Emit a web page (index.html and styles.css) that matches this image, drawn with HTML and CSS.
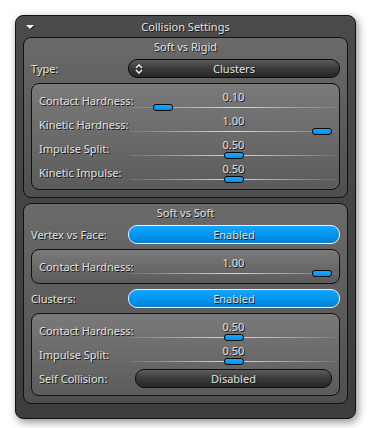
FILE: index.html
```html
<!DOCTYPE html>
<html lang="en">
<head>
  <meta charset="UTF-8" />
  <title>Collision Settings</title>
  <link rel="stylesheet" href="styles.css">
</head>
<body>
  <div class="window">
    <div class="header">
      <span class="arrow"></span>
      <span class="title">Collision Settings</span>
    </div>

    <!-- Soft vs Rigid -->
    <div class="group">
      <div class="group-title">Soft vs Rigid</div>
      <div class="row">
        <span class="label">Type:</span>
        <div class="dropdown">
          <svg class="updown" width="8" height="10" viewBox="0 0 8 10">
            <path d="M1 4 L4 1 L7 4 M1 6 L4 9 L7 6" fill="none" stroke="#e8e8e8" stroke-width="1.6"/>
          </svg>
          <span>Clusters</span>
        </div>
      </div>
      <div class="subpanel">
        <div class="prow">
          <span class="label">Contact Hardness:</span>
          <div class="slider"><span class="value">0.10</span><span class="track"></span><span class="thumb" style="--v:0.10"></span></div>
        </div>
        <div class="prow">
          <span class="label">Kinetic Hardness:</span>
          <div class="slider"><span class="value">1.00</span><span class="track"></span><span class="thumb" style="--v:1"></span></div>
        </div>
        <div class="prow">
          <span class="label">Impulse Split:</span>
          <div class="slider"><span class="value">0.50</span><span class="track"></span><span class="thumb" style="--v:0.5"></span></div>
        </div>
        <div class="prow">
          <span class="label">Kinetic Impulse:</span>
          <div class="slider"><span class="value">0.50</span><span class="track"></span><span class="thumb" style="--v:0.5"></span></div>
        </div>
      </div>
    </div>

    <!-- Soft vs Soft -->
    <div class="group">
      <div class="group-title">Soft vs Soft</div>
      <div class="row">
        <span class="label">Vertex vs Face:</span>
        <div class="toggle on">Enabled</div>
      </div>
      <div class="subpanel">
        <div class="prow">
          <span class="label">Contact Hardness:</span>
          <div class="slider"><span class="value">1.00</span><span class="track"></span><span class="thumb" style="--v:1"></span></div>
        </div>
      </div>
      <div class="row">
        <span class="label">Clusters:</span>
        <div class="toggle on">Enabled</div>
      </div>
      <div class="subpanel">
        <div class="prow">
          <span class="label">Contact Hardness:</span>
          <div class="slider"><span class="value">0.50</span><span class="track"></span><span class="thumb" style="--v:0.5"></span></div>
        </div>
        <div class="prow">
          <span class="label">Impulse Split:</span>
          <div class="slider"><span class="value">0.50</span><span class="track"></span><span class="thumb" style="--v:0.5"></span></div>
        </div>
        <div class="prow">
          <span class="label">Self Collision:</span>
          <div class="toggle off">Disabled</div>
        </div>
      </div>
    </div>
  </div>
</body>
</html>
```

FILE: styles.css
```css
body {
  margin: 0;
  padding: 15px;
  background: #ffffff;
  font-family: 'Noto Sans', 'Open Sans', sans-serif;
  font-size: 11px;
  color: #e0e0e0;
  text-shadow: 1px 1px 0 #1a1a1a;
}

.window {
  width: 325px;
  height: 395px;
  padding: 0 7px 7px;
  border: 1px solid #111;
  border-radius: 8px;
  background: linear-gradient(180deg, #4b4b4b, #3d3d3d);
  box-shadow: 2px 3px 8px rgba(0, 0, 0, 0.45);
  display: flex;
  flex-direction: column;
  gap: 5px;
}

.header {
  height: 21px;
  margin: 0 -7px -5px;
  display: grid;
  grid-template-columns: 1fr auto 1fr;
  align-items: center;
}

.arrow {
  width: 0;
  height: 0;
  margin-left: 10px;
  margin-top: 1px;
  border-left: 4px solid transparent;
  border-right: 4px solid transparent;
  border-top: 4px solid #f4f4f4;
  filter: drop-shadow(1px 1px 0 #222);
}

.title {
  line-height: 19px;
}

.group {
  border: 1px solid #111;
  border-radius: 8px;
  background: linear-gradient(180deg, #6a6a6a, #4f4f4f);
  padding: 0 7px 7px;
  display: flex;
  flex-direction: column;
  gap: 5px;
}

.group-title {
  height: 16px;
  line-height: 18px;
  text-align: center;
}

.row {
  display: flex;
  align-items: center;
  height: 19px;
}

.row .label {
  width: 97px;
  flex: none;
}

.dropdown,
.toggle {
  flex: 1;
  height: 19px;
  box-sizing: border-box;
  border-radius: 9px;
  display: flex;
  align-items: center;
  justify-content: center;
  line-height: 17px;
  position: relative;
}

.dropdown,
.toggle.off {
  border: 1px solid #0c0c0c;
  background: linear-gradient(180deg, #5c5c5c, #3a3a3a 50%, #262626);
}

.toggle.on {
  border: 1px solid #f0f0f0;
  background: linear-gradient(180deg, #16a4ff, #0095f0 55%, #0a7fd0);
}

.updown {
  position: absolute;
  left: 6px;
  top: 4px;
  filter: drop-shadow(1px 1px 0 #222);
}

.subpanel {
  border: 1px solid #111;
  border-radius: 8px;
  background: linear-gradient(180deg, #7a7a7a, #5b5b5b);
  padding: 4px 7px 5px;
}

.prow {
  display: flex;
  align-items: center;
  height: 24px;
}

.prow .label {
  width: 96px;
  flex: none;
}

.prow .toggle {
  margin-top: 1px;
}

.slider {
  flex: 1;
  height: 24px;
  position: relative;
}

.slider .value {
  display: block;
  padding-top: 2px;
  line-height: 14px;
  text-align: center;
}

.slider .track {
  display: block;
  height: 1px;
  margin: 3px -5px 0;
  background: linear-gradient(90deg, rgba(255, 255, 255, 0.08), rgba(255, 255, 255, 0.75) 50%, rgba(255, 255, 255, 0.08));
}

.slider .thumb {
  position: absolute;
  top: 16px;
  left: calc(var(--v) * 177px);
  width: 20px;
  height: 7px;
  box-sizing: border-box;
  border: 1px solid #0a0a0a;
  border-radius: 3px;
  background: linear-gradient(180deg, #1aa6ff, #0092ee);
}
```
